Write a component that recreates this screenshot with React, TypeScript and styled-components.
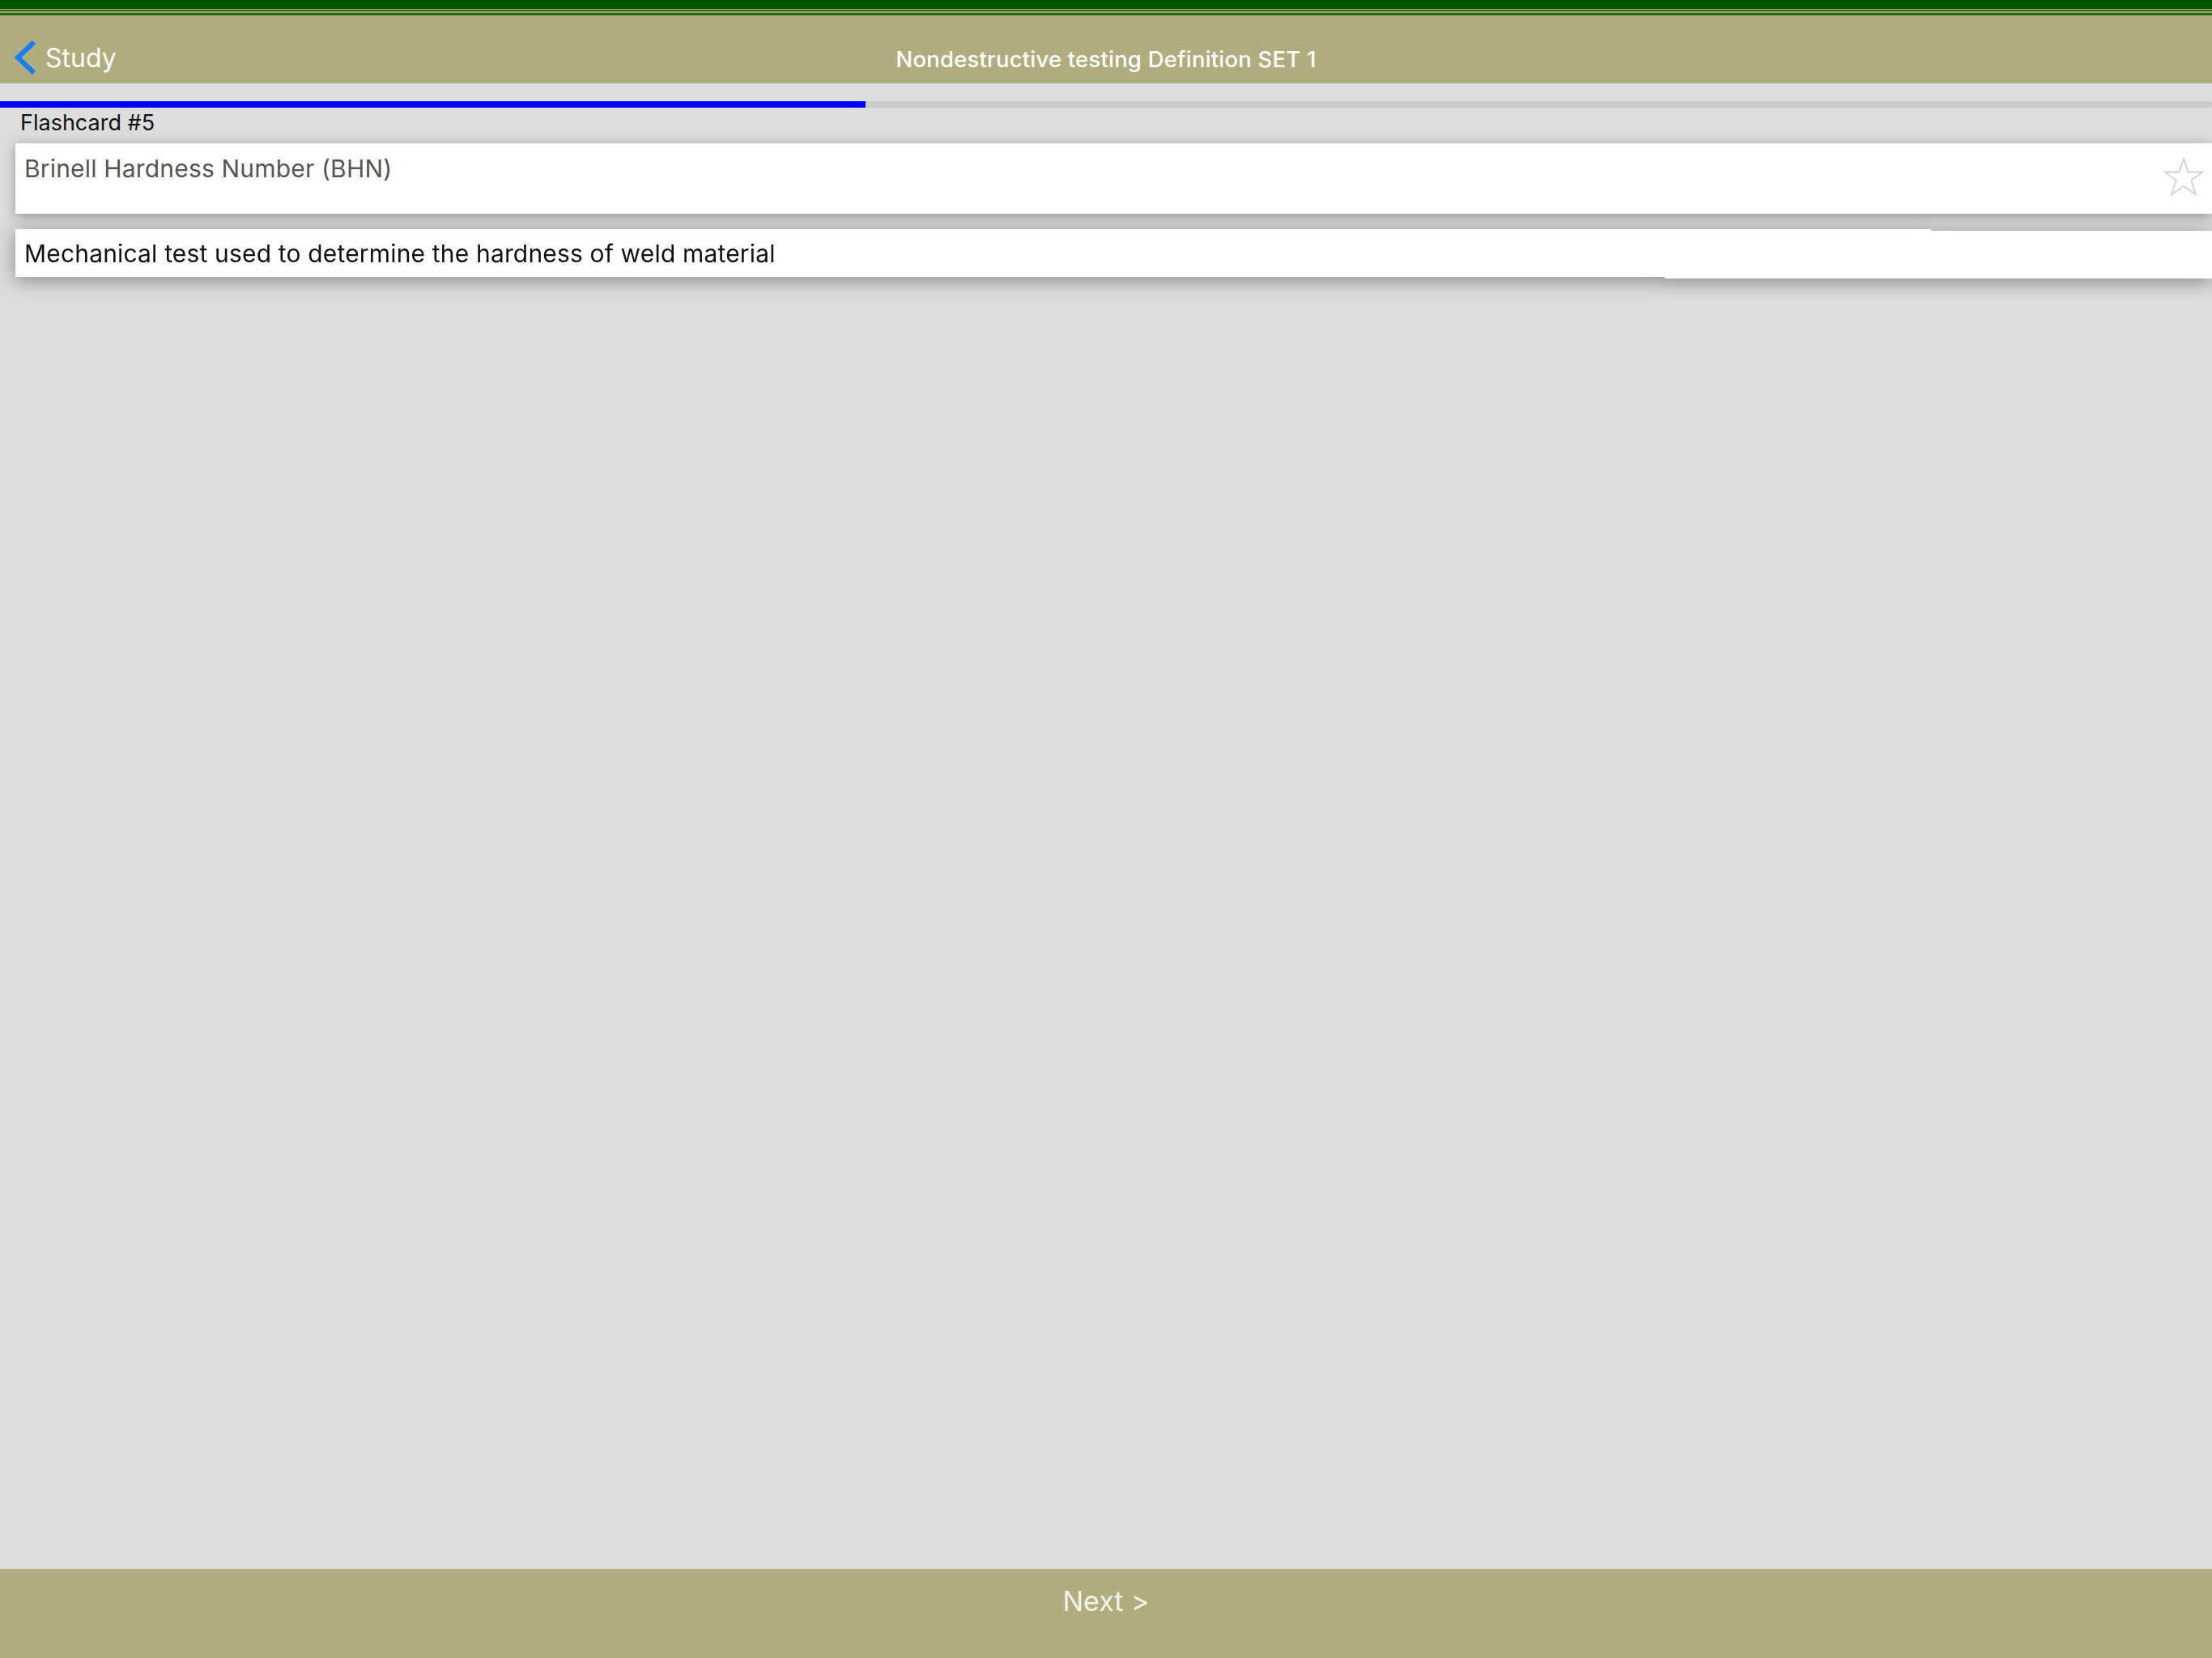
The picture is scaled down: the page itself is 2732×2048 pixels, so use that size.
import React from "react";
import styled, { createGlobalStyle } from "styled-components";

const GlobalStyle = createGlobalStyle`
  html, body {
    margin: 0;
    padding: 0;
    background: #dddddd;
  }
  * {
    box-sizing: border-box;
  }
`;

function App() {
  return (
    <>
      <GlobalStyle />
      <Wrapper>
        <StatusStripes />
        <NavBar>
          <BackLink>
            <svg width="30" height="44" viewBox="0 0 30 44" fill="none">
              <path
                d="M25 3 L5 22 L25 41"
                stroke="#147efb"
                strokeWidth="6"
                strokeLinecap="butt"
                strokeLinejoin="miter"
              />
            </svg>
            <BackLabel>Study</BackLabel>
          </BackLink>
          <NavTitle>Nondestructive testing Definition SET 1</NavTitle>
        </NavBar>
        <Progress>
          <ProgressFill style={{ width: `${(1069 / 2732) * 100}%` }} />
        </Progress>
        <CardLabel>Flashcard #5</CardLabel>
        <QuestionCard>
          <QuestionText>Brinell Hardness Number (BHN)</QuestionText>
          <svg width="50" height="48" viewBox="0 0 54 52" fill="none">
            <path
              d="M27 2 L33 20 L52 20 L37 31 L43 50 L27 39 L11 50 L17 31 L2 20 L21 20 Z"
              stroke="#d2d2d2"
              strokeWidth="2"
            />
          </svg>
        </QuestionCard>
        <AnswerShadow>
          <AnswerCard>
            <AnswerText>Mechanical test used to determine the hardness of weld material</AnswerText>
          </AnswerCard>
        </AnswerShadow>
        <Spacer />
        <Footer>
          <NextButton>Next &gt;</NextButton>
        </Footer>
      </Wrapper>
    </>
  );
}

export default App;

const Wrapper = styled.div`
  display: flex;
  flex-direction: column;
  width: 2732px;
  height: 2048px;
  overflow: hidden;
  background: #dddddd;
  font-family: Inter, "Liberation Sans", sans-serif;
`;

const StatusStripes = styled.div`
  flex: none;
  height: 19px;
  background: linear-gradient(
    to bottom,
    #005500 0 11px,
    #a9ab78 11px 12px,
    #1f6a12 12px 14px,
    #a3a66f 14px 16px,
    #1f6a12 16px 19px
  );
`;

const NavBar = styled.div`
  position: relative;
  flex: none;
  display: flex;
  align-items: center;
  justify-content: center;
  height: 84px;
  background: #b1ac7e;
`;

const BackLink = styled.div`
  position: absolute;
  left: 17px;
  top: 30px;
  display: flex;
  align-items: center;
  gap: 9px;
`;

const BackLabel = styled.span`
  font-size: 32px;
  color: #fff;
`;

const NavTitle = styled.div`
  font-size: 27.5px;
  font-weight: 500;
  letter-spacing: 0.2px;
  color: #fff;
  margin-top: 23px;
`;

const Progress = styled.div`
  flex: none;
  height: 8px;
  margin-top: 22px;
  background: #cbcbcb;
  border-radius: 0 4px 4px 0;
`;

const ProgressFill = styled.div`
  height: 100%;
  background: #0000ff;
`;

const CardLabel = styled.div`
  flex: none;
  height: 44px;
  padding: 3px 0 0 25px;
  font-size: 27px;
  line-height: 32px;
  color: #111;
`;

const QuestionCard = styled.div`
  flex: none;
  display: flex;
  align-items: flex-start;
  justify-content: space-between;
  height: 87px;
  margin-left: 19px;
  padding: 13px 10px 0 11px;
  background: #fff;
  box-shadow: 0 3px 14px rgba(0, 0, 0, 0.34);

  svg {
    margin-top: 4px;
  }
`;

const QuestionText = styled.div`
  font-size: 30px;
  line-height: 36px;
  letter-spacing: 0.18px;
  color: #555;
`;

const AnswerShadow = styled.div`
  flex: none;
  height: 61px;
  margin: 19px 0 0 19px;
  filter: drop-shadow(0 4px 12px rgba(0, 0, 0, 0.4));
`;

const AnswerCard = styled.div`
  height: 100%;
  padding: 12px 0 0 11px;
  background: #fff;
  clip-path: polygon(
    0 0,
    2366px 0,
    2366px 2px,
    100% 2px,
    100% 100%,
    2037px 100%,
    2037px 59px,
    0 59px
  );
`;

const AnswerText = styled.div`
  font-size: 30px;
  line-height: 36px;
  letter-spacing: 0.17px;
  color: #111;
`;

const Spacer = styled.div`
  flex: 1;
`;

const Footer = styled.div`
  flex: none;
  display: flex;
  justify-content: center;
  height: 110px;
  padding-top: 20px;
  background: #b1ac7e;
`;

const NextButton = styled.div`
  font-size: 34px;
  line-height: 40px;
  color: #f4f3ea;
`;
